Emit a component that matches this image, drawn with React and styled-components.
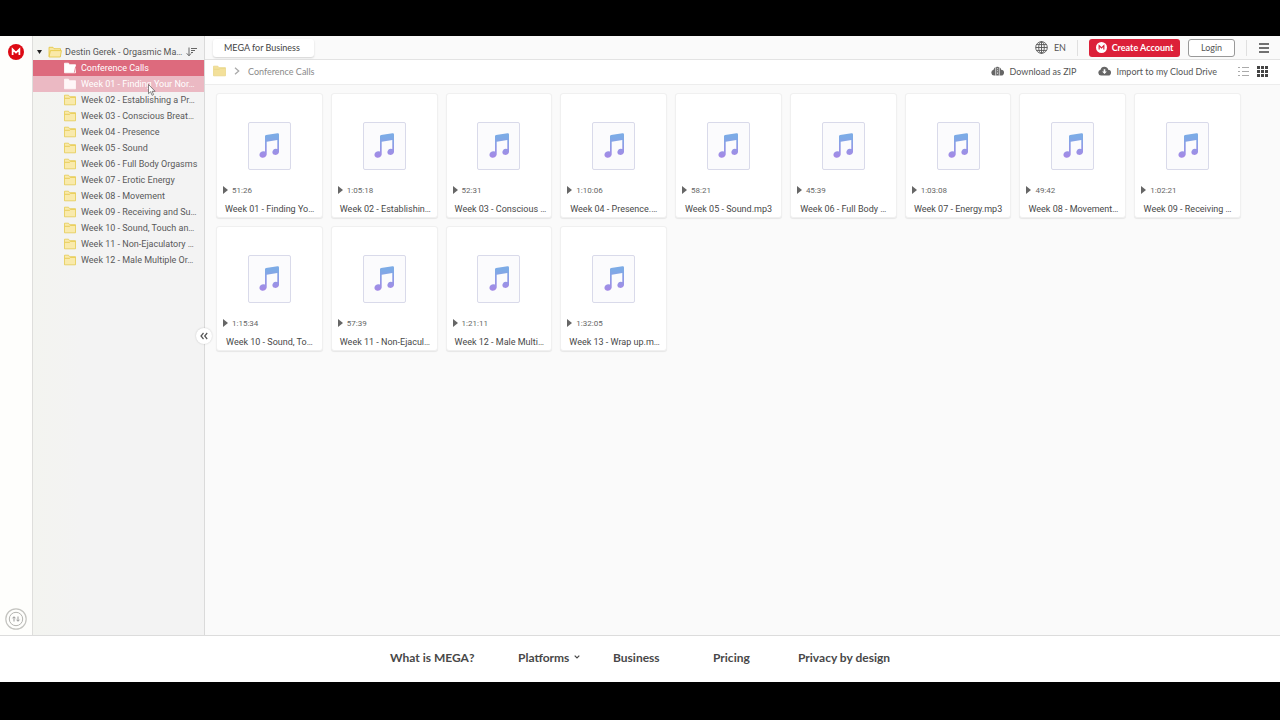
import React from "react";
import styled, { createGlobalStyle, css } from "styled-components";

const GlobalStyle = createGlobalStyle`
  *, *::before, *::after { box-sizing: border-box; }
  body { margin: 0; background: #000; color: #555; font-family: Lato, "Liberation Sans", sans-serif; }
  button { font: inherit; color: inherit; border: 0; background: none; padding: 0; cursor: pointer; }
  a { color: inherit; text-decoration: none; }
  ul, ol { list-style: none; margin: 0; padding: 0; }
  svg { display: block; flex: none; }
`;

const Page = styled.div`
  min-height: 100vh;
  display: flex;
  flex-direction: column;
  border-top: 36px solid #000;
  border-bottom: 38px solid #000;
  background: #fff;
`;

const Workspace = styled.div`
  flex: 1;
  display: flex;
`;

const Rail = styled.nav`
  width: 32px;
  display: flex;
  flex-direction: column;
  justify-content: space-between;
  align-items: center;
  padding: 8px 0 5px;
  background: #fefefc;
`;

const Sidebar = styled.aside`
  position: relative;
  width: 173px;
  padding-top: 8px;
  border-left: 1px solid #dededc;
  border-right: 1px solid #dadada;
  background: linear-gradient(90deg, #f3f4f0, #f3f3f3 48px);
  font-family: Roboto, sans-serif;
  font-size: 9px;
  line-height: 16px;
`;

const TreeRoot = styled.div`
  display: flex;
  align-items: center;
  height: 16px;
  padding: 0 7px 0 4px;
`;

const RootButton = styled.button`
  flex: 1;
  display: flex;
  align-items: center;
  white-space: nowrap;
  text-align: left;
  span { margin-left: 3px; }
  svg + svg { margin-left: 6px; }
`;

const rowTone = {
  selected: css`background: #dd6a7d; color: #fff;`,
  hover: css`background: #ebb9c3; color: #fff;`,
  plain: css`color: #595959;`,
};

const TreeRow = styled.button`
  display: flex;
  align-items: center;
  gap: 5px;
  width: 100%;
  height: 16px;
  padding-left: 31px;
  white-space: nowrap;
  text-align: left;
  ${({ $tone }) => rowTone[$tone]}
`;

const Collapse = styled.button`
  position: absolute;
  right: -8px;
  top: 292px;
  width: 16px;
  height: 16px;
  border-radius: 50%;
  background: #fff;
  box-shadow: 0 0 2px rgba(0, 0, 0, 0.2);
  display: grid;
  place-items: center;
`;

const Pointer = styled.span`
  position: absolute;
  left: 115px;
  top: 48px;
  pointer-events: none;
`;

const Main = styled.main`
  flex: 1;
  min-width: 0;
  background: #fafafa;
`;

const TopBar = styled.header`
  display: flex;
  align-items: center;
  height: 24px;
  padding: 0 10px 0 8px;
  border-bottom: 1px solid #e3e3e3;
  font-size: 9px;
`;

const BusinessTab = styled.a`
  width: 101px;
  height: 18px;
  padding: 0 11px;
  line-height: 18px;
  border-radius: 3px;
  background: #fff;
  box-shadow: 0 1px 2px rgba(0, 0, 0, 0.16);
  color: #444;
  white-space: nowrap;
`;

const BarEnd = styled.div`
  margin-left: auto;
  display: flex;
  align-items: center;
  gap: ${({ $gap }) => $gap}px;
`;

const IconLabel = styled.button`
  display: flex;
  align-items: center;
  gap: 6px;
  white-space: nowrap;
`;

const Divider = styled.span`
  width: 1px;
  height: 16px;
  background: #e0e0e0;
`;

const AccountButtons = styled.div`
  display: flex;
  gap: 8px;
`;

const AccountButton = styled.button`
  display: flex;
  align-items: center;
  justify-content: center;
  gap: 5px;
  height: 18px;
  width: ${({ $primary }) => ($primary ? 91 : 47)}px;
  border-radius: 3px;
  white-space: nowrap;
  ${({ $primary }) =>
    $primary
      ? css`background: #dc2039; color: #fff; font-weight: 700;`
      : css`background: #fff; border: 1px solid #999;`}
`;

const Crumbs = styled.div`
  display: flex;
  align-items: center;
  height: 25px;
  padding: 0 12px 2px 8px;
  border-bottom: 1px solid #ededed;
  background: #fff;
  font-size: 9px;
`;

const Trail = styled.ol`
  display: flex;
  align-items: center;
  gap: 8px;
  color: #8a8a8a;
`;

const Views = styled.div`
  display: flex;
  gap: 8px;
`;

const Files = styled.ul`
  display: grid;
  grid-template-columns: repeat(9, minmax(0, 1fr));
  gap: 8px;
  padding: 8px 39px 8px 11px;
`;

const FileCard = styled.li`
  height: 125px;
  padding: 28px 8px 0;
  border: 1px solid #f0f0f0;
  border-radius: 3px;
  background: #fff;
  box-shadow: 0 1px 1px rgba(0, 0, 0, 0.08);
  font-family: Roboto, sans-serif;
`;

const Thumb = styled.div`
  width: 43px;
  height: 48px;
  margin: 0 auto;
  border: 1px solid #d9daea;
  border-radius: 2px;
  background: #fbfbfd;
  display: grid;
  place-items: center;
`;

const Duration = styled.div`
  display: flex;
  align-items: center;
  gap: 4px;
  height: 16px;
  margin: 12px 0 0 -2px;
  font-size: 8px;
  color: #666;
`;

const FileName = styled.a`
  display: block;
  margin-top: 3px;
  font-size: 9px;
  line-height: 16px;
  text-align: center;
  white-space: nowrap;
  color: #484848;
`;

const Footer = styled.footer`
  display: grid;
  grid-template-columns: 128px 95px 100px 85px 92px;
  justify-content: center;
  align-items: center;
  height: 47px;
  padding-bottom: 4px;
  border-top: 1px solid #dcdcdc;
  background: #fff;
  font-size: 12px;
  font-weight: 700;
  color: #484848;
  white-space: nowrap;
`;

const FooterLink = styled.a`
  display: flex;
  align-items: center;
  gap: 5px;
`;

function MegaMark({ size, disc, letter }) {
  return (
    <svg width={size} height={size} viewBox="0 0 16 16" aria-hidden="true">
      <circle cx="8" cy="8" r="8" fill={disc} />
      <path d="M4.6 11V5.3L8 8.6l3.4-3.3V11" fill="none" stroke={letter} strokeWidth="1.7" />
    </svg>
  );
}

function Folder({ tone = "plain", width = 12 }) {
  const colors = {
    plain: ["#f9eaac", "#e6cb50"],
    pale: ["#f3e09a", "#ead78c"],
    selected: ["#fff", "#fff"],
    hover: ["#fff7f8", "#fff7f8"],
  };
  const [fill, line] = colors[tone];
  return (
    <svg width={width} height="12" viewBox="0 0 12 12" preserveAspectRatio="none" aria-hidden="true">
      <path d="M.5 10.8V1.2h4l1 1.5h6v8.1z" fill={fill} stroke={line} strokeWidth=".8" />
      {tone !== "selected" && <path d="M.7 4.3h5l.9-.9h4.7" fill="none" stroke={line} strokeWidth=".9" />}
      {tone === "selected" && <path d="M10.4 10.5l1.3-6" stroke="#dd6a7d" strokeWidth=".8" />}
    </svg>
  );
}

function OpenFolder() {
  return (
    <svg width="14" height="12" viewBox="0 0 14 12" aria-hidden="true">
      <path d="M1 10.5V1.3h4l1 1.4h6.5v2" fill="#f8e7a0" stroke="#e3c53c" strokeWidth=".8" />
      <path d="M1 11l1.4-6.4h11L12.3 11z" fill="#fae9a8" stroke="#e3c53c" strokeWidth=".8" />
    </svg>
  );
}

function Cloud({ zip }) {
  return (
    <svg width="13" height="10" viewBox="0 0 13 10" fill="#666" aria-hidden="true">
      <path d="M3.1 9.5A2.9 2.9 0 0 1 2.5 3.8 4 4 0 0 1 10.2 3.7 2.9 2.9 0 0 1 10 9.5z" />
      {zip ? (
        <path d="M4.7 1v8.8M8.3 1v8.8M6.5 2.2v1M6.5 4.2v1M6.5 6.4v1.5" stroke="#fff" strokeWidth=".7" />
      ) : (
        <path d="M5.7 3.2h1.6v2.3h1.6L6.5 8 4.1 5.5h1.6z" fill="#fff" />
      )}
    </svg>
  );
}

function Note() {
  return (
    <svg width="22" height="26" viewBox="0 0 22 26" aria-hidden="true">
      <defs>
        <linearGradient id="note" x1="0" y1="0" x2="0" y2="26" gradientUnits="userSpaceOnUse">
          <stop offset=".15" stopColor="#7dabe6" />
          <stop offset=".9" stopColor="#a38ae6" />
        </linearGradient>
      </defs>
      <path
        fill="url(#note)"
        d="M7 3.2Q7 2.3 8 2L19.5.3Q21 .1 21 1.4V19.3A3.4 3 -20 1 1 19.3 16.1V7L8.7 8.7V21.5A3.7 3.2 -20 1 1 7 18.6z"
      />
    </svg>
  );
}

const folders = [
  "Conference Calls",
  "Week 01 - Finding Your Nor…",
  "Week 02 - Establishing a Pr…",
  "Week 03 - Conscious Breat…",
  "Week 04 - Presence",
  "Week 05 - Sound",
  "Week 06 - Full Body Orgasms",
  "Week 07 - Erotic Energy",
  "Week 08 - Movement",
  "Week 09 - Receiving and Su…",
  "Week 10 - Sound, Touch an…",
  "Week 11 - Non-Ejaculatory …",
  "Week 12 - Male Multiple Or…",
];

const files = [
  ["Week 01 - Finding Yo…", "51:26"],
  ["Week 02 - Establishin…", "1:05:18"],
  ["Week 03 - Conscious …", "52:31"],
  ["Week 04 - Presence.…", "1:10:06"],
  ["Week 05 - Sound.mp3", "58:21"],
  ["Week 06 - Full Body …", "45:39"],
  ["Week 07 - Energy.mp3", "1:03:08"],
  ["Week 08 - Movement…", "49:42"],
  ["Week 09 - Receiving …", "1:02:21"],
  ["Week 10 - Sound, To…", "1:15:34"],
  ["Week 11 - Non-Ejacul…", "57:39"],
  ["Week 12 - Male Multi…", "1:21:11"],
  ["Week 13 - Wrap up.m…", "1:32:05"],
];

const footerLinks = ["What is MEGA?", "Platforms", "Business", "Pricing", "Privacy by design"];

const toneOf = (index) => ["selected", "hover"][index] || "plain";

export default function App() {
  return (
    <>
      <GlobalStyle />
      <Page>
        <Workspace>
          <Rail>
            <a href="#home" aria-label="MEGA">
              <MegaMark size={16} disc="#dd0a14" letter="#fff" />
            </a>
            <button aria-label="Transfers">
              <svg width="22" height="22" viewBox="0 0 22 22" fill="none" stroke="#c4c4c0">
                <circle cx="11" cy="11" r="10.2" strokeWidth="1.2" />
                <circle cx="11" cy="11" r="6.7" stroke="#b4b4b0" />
                <path d="M9 13.5V9M7.5 10.3L9 8.7l1.5 1.6M13 8.5V13M11.5 11.7L13 13.3l1.5-1.6" stroke="#999" />
              </svg>
            </button>
          </Rail>

          <Sidebar>
            <TreeRoot>
              <RootButton>
                <svg width="5" height="4" viewBox="0 0 5 4"><path d="M0 0h5L2.5 4z" fill="#222" /></svg>
                <OpenFolder />
                <span>Destin Gerek - Orgasmic Ma…</span>
              </RootButton>
              <button aria-label="Sort">
                <svg width="11" height="10" viewBox="0 0 11 10" fill="none" stroke="#666">
                  <path d="M3 .5v8M.7 6.3L3 8.8l2-2.3M5 1.5h6M5 3.5h4M5 5.5h2" />
                </svg>
              </button>
            </TreeRoot>
            <ul>
              {folders.map((name, i) => (
                <li key={name}>
                  <TreeRow $tone={toneOf(i)}>
                    <Folder tone={toneOf(i)} />
                    {name}
                  </TreeRow>
                </li>
              ))}
            </ul>
            <Pointer>
              <svg width="8" height="12" viewBox="0 0 8 12">
                <path d="M.5.5v9.2l2.1-2 1.5 3.6 1.5-.7-1.5-3.3h3z" fill="#fff" stroke="#555" strokeWidth=".7" />
              </svg>
            </Pointer>
            <Collapse aria-label="Collapse sidebar">
              <svg width="8" height="8" viewBox="0 0 8 8" fill="none" stroke="#555" strokeWidth="1.2">
                <path d="M3.5 1L1 4l2.5 3M7.2 1L4.7 4l2.5 3" />
              </svg>
            </Collapse>
          </Sidebar>

          <Main>
            <TopBar>
              <BusinessTab href="#business">MEGA for Business</BusinessTab>
              <BarEnd $gap={11}>
                <IconLabel>
                  <svg width="13" height="13" viewBox="0 0 13 13" fill="none" stroke="#555" strokeWidth=".9">
                    <circle cx="6.5" cy="6.5" r="5.8" />
                    <ellipse cx="6.5" cy="6.5" rx="2.8" ry="5.8" />
                    <path d="M6.5.7v11.6M.7 6.5h11.6M1.5 3.6h10M1.5 9.4h10" />
                  </svg>
                  EN
                </IconLabel>
                <Divider />
                <AccountButtons>
                  <AccountButton $primary>
                    <MegaMark size={11} disc="#fff" letter="#dc2039" />
                    Create Account
                  </AccountButton>
                  <AccountButton>Login</AccountButton>
                </AccountButtons>
                <Divider />
                <button aria-label="Menu">
                  <svg width="12" height="10" viewBox="0 0 12 10"><path d="M1 1h10M1 5h10M1 9h10" stroke="#444" strokeWidth="1.6" /></svg>
                </button>
              </BarEnd>
            </TopBar>

            <Crumbs>
              <Trail>
                <li><Folder tone="pale" width={13} /></li>
                <li>
                  <svg width="6" height="8" viewBox="0 0 6 8"><path d="M1 .7L4.7 4 1 7.3" fill="none" stroke="#aaa" strokeWidth="1.3" /></svg>
                </li>
                <li>Conference Calls</li>
              </Trail>
              <BarEnd $gap={21}>
                <IconLabel><Cloud zip />Download as ZIP</IconLabel>
                <IconLabel><Cloud />Import to my Cloud Drive</IconLabel>
                <Views>
                  <button aria-label="List view">
                    <svg width="11" height="11" viewBox="0 0 11 11"><path d="M0 1.5h2M4 1.5h7M0 5.5h2M4 5.5h7M0 9.5h2M4 9.5h7" stroke="#aaa" strokeWidth="1.2" /></svg>
                  </button>
                  <button aria-label="Grid view">
                    <svg width="11" height="11" viewBox="0 0 11 11"><path d="M0 1.5h3m1 0h3m1 0h3M0 5.5h3m1 0h3m1 0h3M0 9.5h3m1 0h3m1 0h3" stroke="#444" strokeWidth="2.8" /></svg>
                  </button>
                </Views>
              </BarEnd>
            </Crumbs>

            <Files>
              {files.map(([name, time]) => (
                <FileCard key={name}>
                  <Thumb><Note /></Thumb>
                  <Duration>
                    <svg width="5" height="8" viewBox="0 0 5 8"><path d="M0 0l5 4-5 4z" fill="#666" /></svg>
                    {time}
                  </Duration>
                  <FileName href="#file">{name}</FileName>
                </FileCard>
              ))}
            </Files>
          </Main>
        </Workspace>

        <Footer>
          {footerLinks.map((label) => (
            <FooterLink key={label} href="#footer">
              {label}
              {label === "Platforms" && (
                <svg width="6" height="4" viewBox="0 0 6 4"><path d="M.7.6L3 3 5.3.6" fill="none" stroke="#484848" strokeWidth="1.2" /></svg>
              )}
            </FooterLink>
          ))}
        </Footer>
      </Page>
    </>
  );
}
